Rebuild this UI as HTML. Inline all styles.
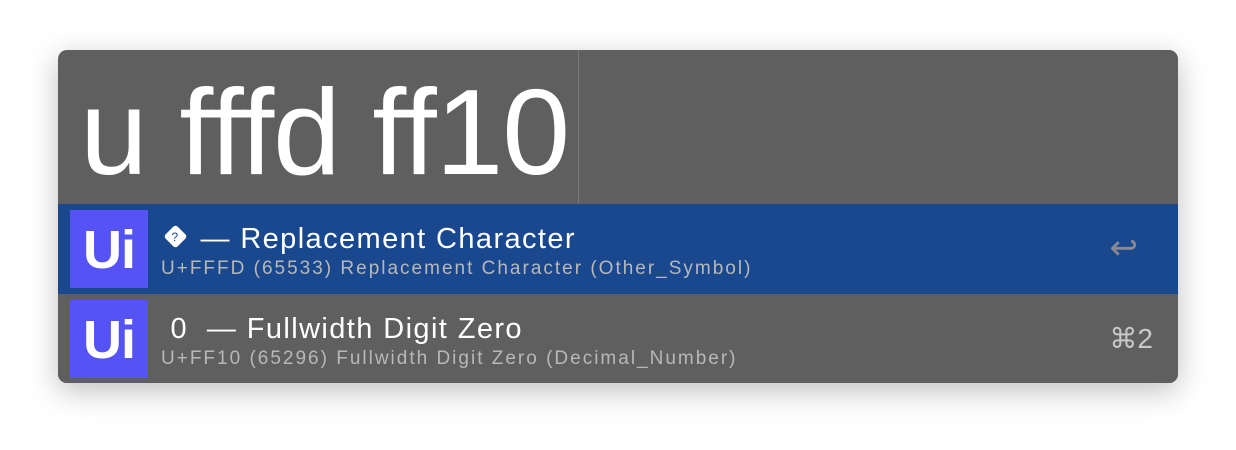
<!DOCTYPE html>
<html><head><style>
body{margin:0;width:1236px;height:450px;background:#fff;position:relative;font-family:"Liberation Sans",sans-serif;overflow:hidden}
.panel{position:absolute;left:58px;top:50px;width:1120px;height:333px;background:#5f5f5f;border-radius:9px;overflow:hidden;box-shadow:0 8px 30px rgba(0,0,0,.25)}
.q{position:absolute;left:22px;top:12px;font-size:122px;color:#fff;letter-spacing:-1.2px;line-height:140px;white-space:nowrap}
.cur{position:absolute;left:520px;top:0;width:1px;height:154px;background:#7a7a7a}
.row{position:absolute;left:0;width:1120px;height:90px}
.r1{top:154px;background:#19488f}
.r2{top:244px;background:#5f5f5f}
.ic{position:absolute;left:12px;top:6px;width:78px;height:78px;background:#5553f5;color:#fff;font-size:54px;font-weight:bold;line-height:80px;text-align:center;letter-spacing:-1px}
.t{position:absolute;left:103px;top:19px;font-size:29px;color:#fff;white-space:nowrap;letter-spacing:1.4px}
.s{position:absolute;left:103px;top:54px;font-size:19px;color:#b8b8b8;white-space:nowrap;letter-spacing:2px}
.k{position:absolute;right:25px;top:28px;font-size:28px;color:#c8c8c8}
</style></head><body>
<div class="panel">
<div class="q">u fffd ff10</div>
<div class="cur"></div>
<div class="row r1"><div class="ic">Ui</div>
<div class="t"><svg width="30" height="28" viewBox="0 0 30 28" style="vertical-align:-3px"><rect x="6" y="5" width="17" height="17" rx="3" transform="rotate(45 14.5 13.5)" fill="#fff"/><text x="14.5" y="18" font-size="12" text-anchor="middle" fill="#19488f" font-family="Liberation Sans">?</text></svg> — Replacement Character</div>
<div class="s">U+FFFD (65533) Replacement Character (Other_Symbol)</div>
<div class="k" style="right:40px;top:24px;font-size:34px;color:#8a8a95">↩</div></div>
<div class="row r2"><div class="ic">Ui</div>
<div class="t">&nbsp;0&nbsp; — Fullwidth Digit Zero</div>
<div class="s">U+FF10 (65296) Fullwidth Digit Zero (Decimal_Number)</div>
<div class="k">⌘2</div></div>
</div>
</body></html>
